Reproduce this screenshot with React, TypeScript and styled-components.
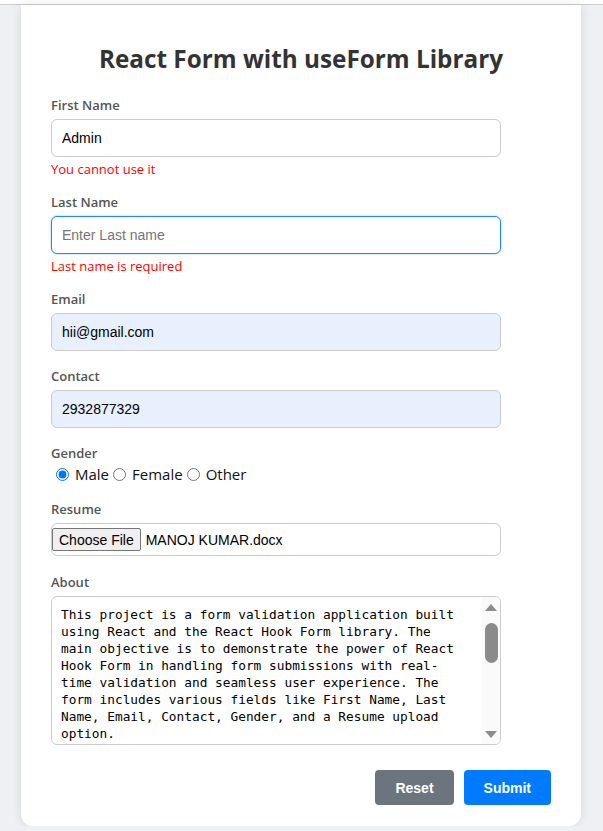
import React from 'react';
import styled, { createGlobalStyle } from 'styled-components';

const GlobalStyle = createGlobalStyle`
  html, body {
    margin: 0;
    padding: 0;
    background: #eef0f4;
    font-family: 'Segoe UI', 'Open Sans', sans-serif;
  }
  * {
    box-sizing: border-box;
  }
`;

const TopStrip = styled.div`
  height: 5px;
  background: #ffffff;
  border-bottom: 1px solid #cccccc;
`;

const Card = styled.div`
  margin: 0 22px 0 21px;
  padding: 38px 30px 21px 30px;
  background: #ffffff;
  border-radius: 0 0 12px 12px;
  box-shadow: 0 0 12px rgba(0, 0, 0, 0.1);
`;

const Title = styled.h2`
  margin: 0 0 22px 0;
  text-align: center;
  font-size: 24.3px;
  line-height: 32px;
  font-weight: 700;
  color: #333333;
`;

const FormGroup = styled.div<{ $gap?: number }>`
  margin-bottom: ${p => p.$gap ?? 17}px;
`;

const Label = styled.label<{ $tight?: boolean }>`
  display: block;
  font-size: 13px;
  line-height: 16px;
  font-weight: 600;
  color: #555555;
  margin-bottom: ${p => (p.$tight ? '2px' : '6px')};
`;

const Input = styled.input<{ $autofill?: boolean; $focused?: boolean }>`
  display: block;
  width: 90%;
  height: 38px;
  padding: 0 10px;
  font-family: 'Liberation Sans', Arial, sans-serif;
  font-size: 14px;
  color: #000000;
  background: ${p => (p.$autofill ? '#e8f0fe' : '#ffffff')};
  border: 1px solid ${p => (p.$focused ? '#2684ff' : '#cccccc')};
  border-radius: 6px;
  outline: none;
  box-shadow: ${p => (p.$focused ? '0 0 2px rgba(0, 123, 255, 0.5)' : 'none')};

  &::placeholder {
    color: #757575;
  }
`;

const ErrorText = styled.p`
  margin: 4px 0 0 0;
  font-size: 13px;
  line-height: 16px;
  color: #ff0000;
`;

const RadioRow = styled.div`
  display: flex;
  align-items: center;
  height: 21px;
  padding-left: 1px;
  font-size: 15px;
  color: #111111;
`;

const RadioOption = styled.label`
  display: inline-flex;
  align-items: center;
`;

const Radio = styled.input`
  width: 13px;
  height: 13px;
  margin: 1px 6px 0 4px;
  accent-color: #0075ff;
`;

const FileBox = styled.div`
  display: flex;
  align-items: center;
  width: 90%;
  height: 33px;
  padding: 0;
  border: 1px solid #cccccc;
  border-radius: 6px;
  font-family: 'Liberation Sans', Arial, sans-serif;
  font-size: 14px;
  color: #000000;
`;

const FileButton = styled.button`
  height: 23px;
  padding: 0 6px;
  margin-right: 5px;
  font-family: 'Liberation Sans', Arial, sans-serif;
  font-size: 14px;
  color: #000000;
  background: #efefef;
  border: 1px solid #767676;
  border-radius: 2px;
`;

const TextAreaWrap = styled.div`
  position: relative;
  width: 90%;
  height: 149px;
`;

const TextArea = styled.textarea`
  display: block;
  width: 100%;
  height: 100%;
  padding: 9px 39px 9px 9px;
  font-family: 'DejaVu Sans Mono', 'Liberation Mono', monospace;
  font-size: 12.8px;
  line-height: 17px;
  color: #000000;
  border: 1px solid #cccccc;
  border-radius: 6px;
  resize: none;
  overflow: hidden;
  outline: none;
`;

const ScrollTrack = styled.div`
  position: absolute;
  top: 1px;
  right: 1px;
  bottom: 1px;
  width: 18px;
  display: flex;
  flex-direction: column;
  align-items: center;
  background: #fafafa;
  border-radius: 0 5px 5px 0;
`;

const Arrow = styled.div<{ $dir: 'up' | 'down' }>`
  width: 0;
  height: 0;
  margin: ${p => (p.$dir === 'up' ? '7px 0 0 0' : 'auto 0 6px 0')};
  border-left: 6px solid transparent;
  border-right: 6px solid transparent;
  ${p =>
    p.$dir === 'up'
      ? 'border-bottom: 7px solid #8b8b8b;'
      : 'border-top: 7px solid #8b8b8b;'}
`;

const Thumb = styled.div`
  width: 13px;
  height: 40px;
  margin-top: 12px;
  background: #8b8b8b;
  border-radius: 7px;
`;

const ButtonRow = styled.div`
  display: flex;
  justify-content: flex-end;
  gap: 10px;
  margin-top: 25px;
`;

const ActionButton = styled.button<{ $variant: 'reset' | 'submit' }>`
  height: 35px;
  padding: 0 20px;
  border: none;
  border-radius: 4px;
  font-family: 'Liberation Sans', Arial, sans-serif;
  font-size: 14px;
  font-weight: 700;
  color: #ffffff;
  background: ${p => (p.$variant === 'submit' ? '#007bff' : '#6c757d')};
  cursor: pointer;
`;

const aboutText =
  'This project is a form validation application built using React and the React Hook Form library. The main objective is to demonstrate the power of React Hook Form in handling form submissions with real-time validation and seamless user experience. The form includes various fields like First Name, Last Name, Email, Contact, Gender, and a Resume upload option.';

const App: React.FC = () => (
  <>
    <GlobalStyle />
    <TopStrip />
    <Card>
      <Title>React Form with useForm Library</Title>

      <FormGroup>
        <Label>First Name</Label>
        <Input defaultValue="Admin" />
        <ErrorText>You cannot use it</ErrorText>
      </FormGroup>

      <FormGroup>
        <Label>Last Name</Label>
        <Input placeholder="Enter Last name" $focused />
        <ErrorText>Last name is required</ErrorText>
      </FormGroup>

      <FormGroup>
        <Label>Email</Label>
        <Input defaultValue="hii@gmail.com" $autofill />
      </FormGroup>

      <FormGroup>
        <Label>Contact</Label>
        <Input defaultValue="2932877329" $autofill />
      </FormGroup>

      <FormGroup>
        <Label $tight>Gender</Label>
        <RadioRow>
          <RadioOption>
            <Radio type="radio" name="gender" defaultChecked />
            Male
          </RadioOption>
          <RadioOption>
            <Radio type="radio" name="gender" />
            Female
          </RadioOption>
          <RadioOption>
            <Radio type="radio" name="gender" />
            Other
          </RadioOption>
        </RadioRow>
      </FormGroup>

      <FormGroup $gap={18}>
        <Label>Resume</Label>
        <FileBox>
          <FileButton type="button">Choose File</FileButton>
          <span>MANOJ KUMAR.docx</span>
        </FileBox>
      </FormGroup>

      <div>
        <Label>About</Label>
        <TextAreaWrap>
          <TextArea defaultValue={aboutText} />
          <ScrollTrack>
            <Arrow $dir="up" />
            <Thumb />
            <Arrow $dir="down" />
          </ScrollTrack>
        </TextAreaWrap>
      </div>

      <ButtonRow>
        <ActionButton type="button" $variant="reset">Reset</ActionButton>
        <ActionButton type="submit" $variant="submit">Submit</ActionButton>
      </ButtonRow>
    </Card>
  </>
);

export default App;
